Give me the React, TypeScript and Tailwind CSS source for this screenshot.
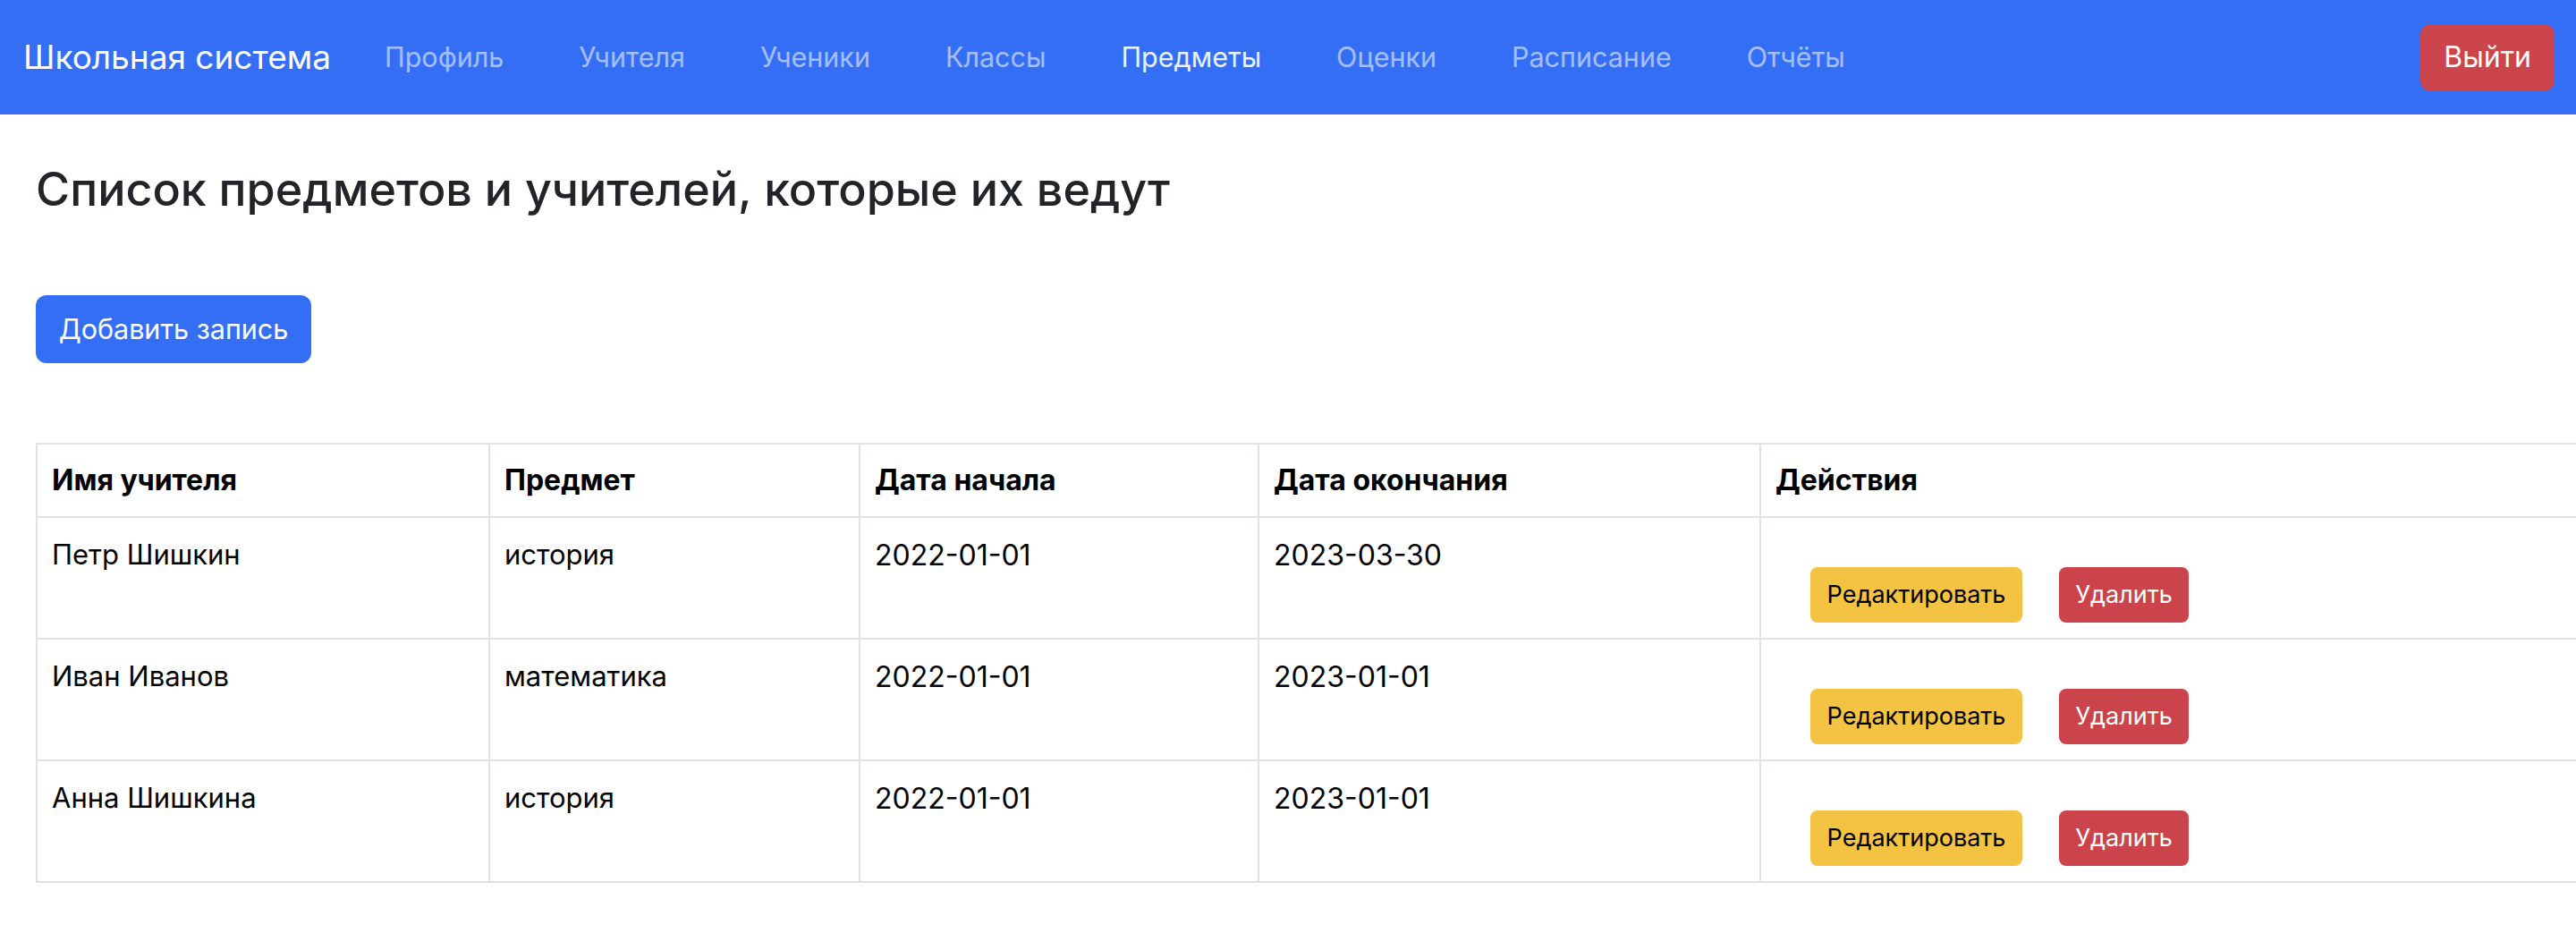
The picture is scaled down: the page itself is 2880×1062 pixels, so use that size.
const links = ["Профиль", "Учителя", "Ученики", "Классы", "Предметы", "Оценки", "Расписание", "Отчёты"];

const rows = [
  { teacher: "Петр Шишкин", subject: "история", start: "2022-01-01", end: "2023-03-30" },
  { teacher: "Иван Иванов", subject: "математика", start: "2022-01-01", end: "2023-01-01" },
  { teacher: "Анна Шишкина", subject: "история", start: "2022-01-01", end: "2023-01-01" },
];

const Navbar = () => (
  <div className="w-full h-[128px] bg-[#346ef5] flex flex-row items-center justify-between pl-[26px] pr-[24px]">
    <div className="flex flex-row items-center">
      <span className="text-[37px] text-white w-[404px]">Школьная система</span>
      <nav className="flex flex-row items-center gap-[84px]">
        {links.map((l) => (
          <a
            key={l}
            className={l === "Предметы" ? "text-[30.5px] text-white/90" : "text-[30.5px] text-white/55"}
          >
            {l}
          </a>
        ))}
      </nav>
    </div>
    <button className="h-[75px] px-[26px] rounded-[12px] bg-[#cd454c] text-white text-[32px]">Выйти</button>
  </div>
);

export default function App() {
  return (
    <div className="min-h-screen bg-white overflow-hidden" style={{ fontFamily: "Inter, 'Noto Sans', sans-serif" }}>
      <Navbar />
      <div className="pl-[40px]">
        <h1 className="mt-[44px] text-[52px] leading-[80px] font-medium text-[#212529]">
          Список предметов и учителей, которые их ведут
        </h1>
        <button className="mt-[78px] h-[76px] w-[308px] rounded-[12px] bg-[#346ef5] text-white text-[30.5px]">
          Добавить запись
        </button>
        <table className="mt-[89px] w-[2880px] border-collapse table-fixed text-[31px] text-black">
          <colgroup>
            <col className="w-[506px]" />
            <col className="w-[414px]" />
            <col className="w-[446px]" />
            <col className="w-[561px]" />
            <col />
          </colgroup>
          <thead>
            <tr className="h-[82px]">
              {["Имя учителя", "Предмет", "Дата начала", "Дата окончания", "Действия"].map((h) => (
                <th key={h} className="border-2 border-[#dee2e6] px-[16px] text-left text-[32px] font-bold align-middle">
                  {h}
                </th>
              ))}
            </tr>
          </thead>
          <tbody>
            {rows.map((r) => (
              <tr key={r.teacher} className="h-[136px]">
                <td className="border-2 border-[#dee2e6] px-[16px] pt-[18px] align-top">{r.teacher}</td>
                <td className="border-2 border-[#dee2e6] px-[16px] pt-[18px] align-top">{r.subject}</td>
                <td className="border-2 border-[#dee2e6] px-[16px] pt-[18px] align-top text-[32px]">{r.start}</td>
                <td className="border-2 border-[#dee2e6] px-[16px] pt-[18px] align-top text-[32px]">{r.end}</td>
                <td className="border-2 border-[#dee2e6] pl-[55px] pt-[55px] pb-[15px] align-top">
                  <div className="flex flex-row gap-[41px]">
                    <button className="h-[62px] w-[237px] rounded-[8px] bg-[#f5c344] text-black text-[27px]">
                      Редактировать
                    </button>
                    <button className="h-[62px] w-[145px] rounded-[8px] bg-[#cc444b] text-white text-[27px]">
                      Удалить
                    </button>
                  </div>
                </td>
              </tr>
            ))}
          </tbody>
        </table>
      </div>
    </div>
  );
}
